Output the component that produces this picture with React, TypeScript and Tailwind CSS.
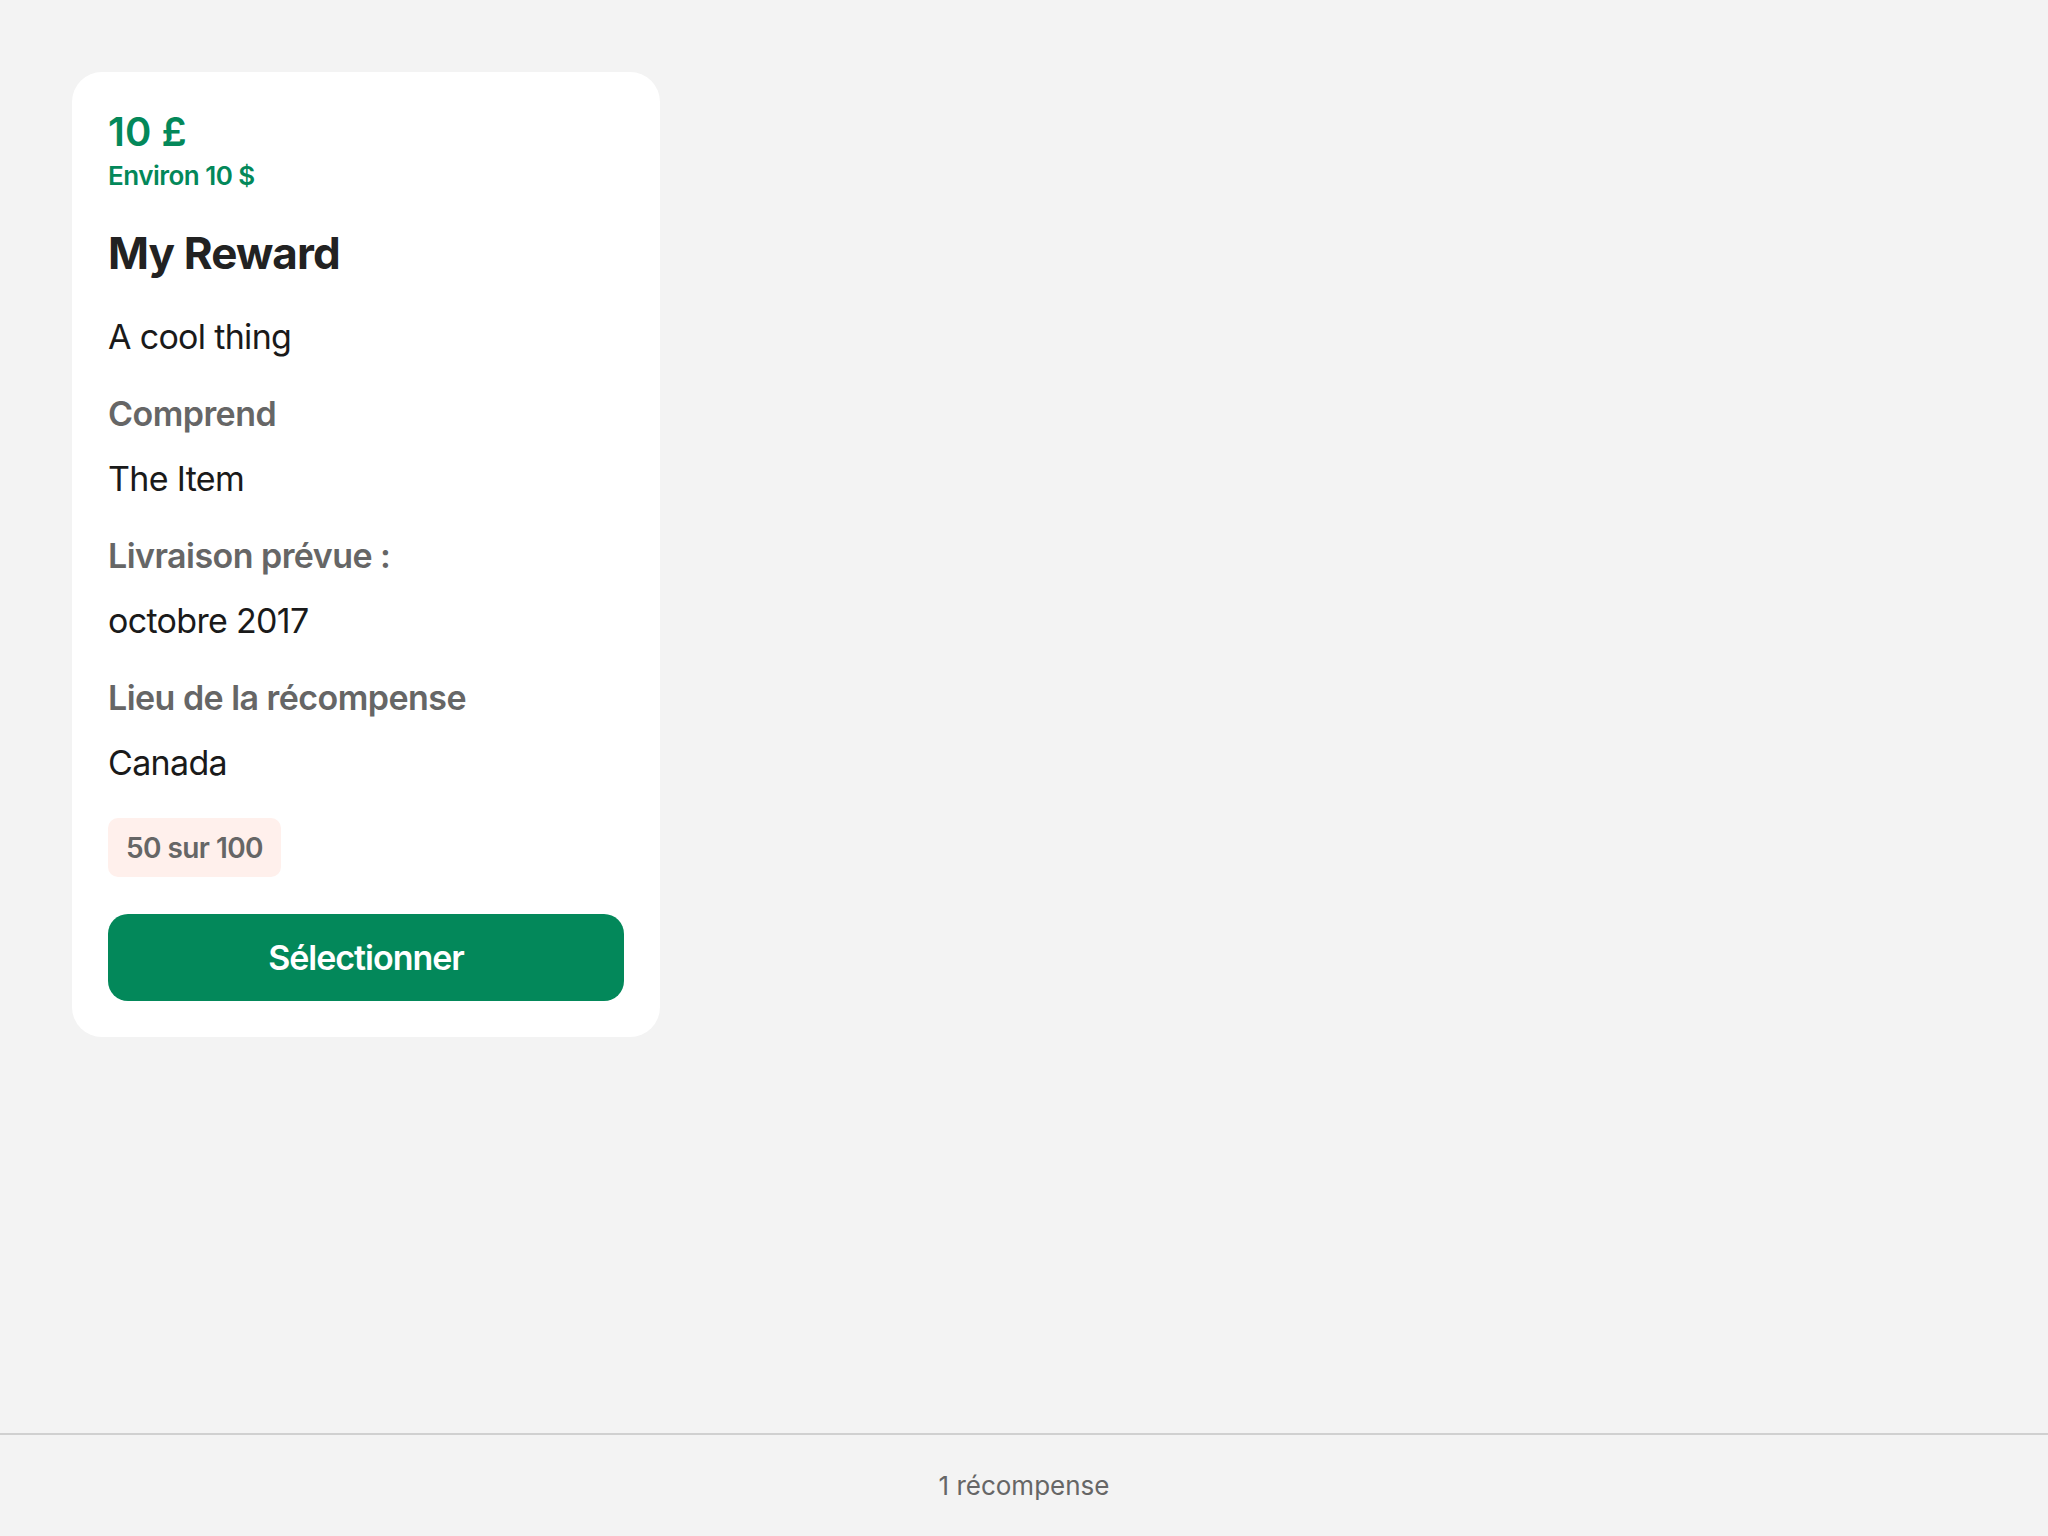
import React from 'react';

const font = { fontFamily: 'Inter, "Noto Sans", sans-serif' };

type Section = { label: string; value: string };

const sections: Section[] = [
  { label: 'Comprend', value: 'The Item' },
  { label: 'Livraison prévue :', value: 'octobre 2017' },
  { label: 'Lieu de la récompense', value: 'Canada' },
];

const RewardCard = () => (
  <div className="w-[588px] rounded-[30px] bg-white px-9 pt-9 pb-9">
    <p className="text-[40px] leading-[48px] font-semibold text-[#03885a]">10 £</p>
    <p className="mt-1 text-[26px] leading-[32px] font-semibold tracking-[-0.02em] text-[#03885a]">Environ 10 $</p>
    <h2 className="mt-[35px] text-[44px] leading-[52px] font-bold tracking-[-0.02em] text-[#222222]">My Reward</h2>
    <p className="mt-[37px] text-[34px] leading-[42px] tracking-[-0.02em] text-[#1a1a1a]">A cool thing</p>

    {sections.map((s) => (
      <div key={s.label}>
        <p className="mt-[35px] text-[34px] leading-[42px] font-semibold tracking-[-0.016em] text-[#666666]">{s.label}</p>
        <p className="mt-[23px] text-[34px] leading-[42px] tracking-[-0.02em] text-[#1a1a1a]">{s.value}</p>
      </div>
    ))}

    <div className="mt-[34px] flex">
      <span className="flex h-[59px] items-center rounded-[10px] bg-[#fff0ec] px-[18px] text-[28px] font-semibold tracking-[-0.02em] text-[#666666]">
        50 sur 100
      </span>
    </div>

    <button className="mt-[37px] flex h-[87px] w-full items-center justify-center rounded-[20px] bg-[#03885a] text-[34px] font-semibold tracking-[-0.03em] text-white">
      Sélectionner
    </button>
  </div>
);

export default function App() {
  return (
    <div style={font} className="flex min-h-screen flex-col bg-[#f3f3f3]">
      <main className="flex-1 p-[72px]">
        <RewardCard />
      </main>
      <footer className="flex h-[103px] items-center justify-center border-t-2 border-[#d0d0d0] text-[26px] text-[#666666]">
        1 récompense
      </footer>
    </div>
  );
}
